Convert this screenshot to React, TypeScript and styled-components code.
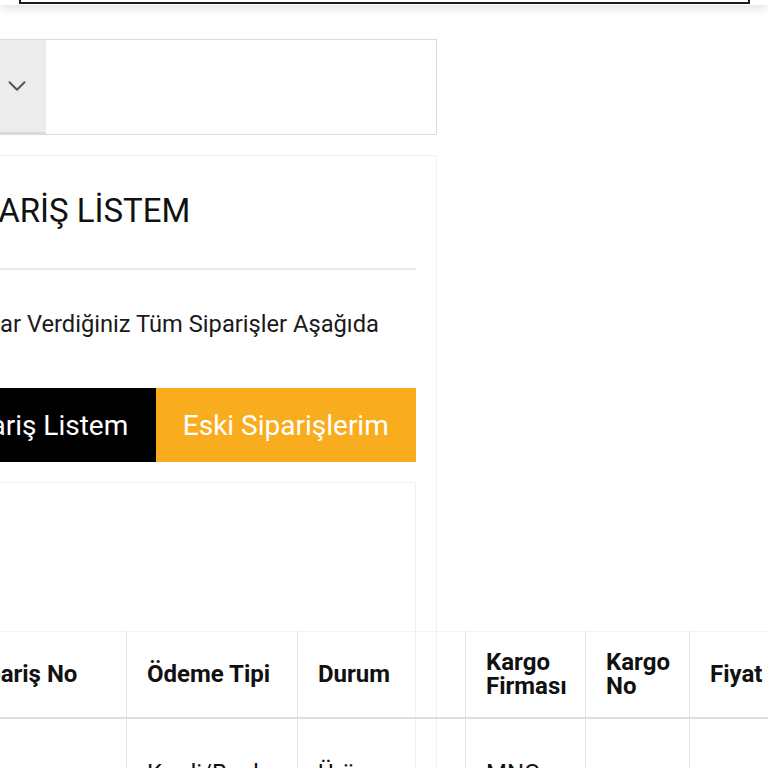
import React from "react";
import styled, { createGlobalStyle } from "styled-components";
import { ChevronDown } from "lucide-react";

const GlobalStyle = createGlobalStyle`
  html, body {
    margin: 0;
    padding: 0;
    background: #fff;
    overflow: hidden;
  }
  body {
    font-family: Roboto, "Liberation Sans", Arial, sans-serif;
    color: #111;
  }
  * {
    box-sizing: border-box;
  }
`;

const Header = styled.header`
  position: relative;
  z-index: 2;
  margin-top: -50px;
  padding: 6px 18px 1px 19px;
  background: #fff;
  box-shadow: 0 3px 10px rgba(0, 0, 0, 0.13);
`;

const SearchBox = styled.div`
  height: 48px;
  border: 2px solid #1d1d1d;
  background: #fff;
`;

const Main = styled.main`
  width: 534px;
  margin: 34px 0 0 -97px;
  display: flex;
  flex-direction: column;
  gap: 20px;
`;

const FilterRow = styled.div`
  display: flex;
  height: 96px;
  border: 1px solid #dcdcdc;
  background: #fff;
`;

const SelectButton = styled.div`
  width: 142px;
  display: flex;
  align-items: center;
  justify-content: flex-end;
  padding-right: 14px;
  background: #ececec;
  border-bottom: 2px solid #dadada;
  color: #555;
`;

const FilterInput = styled.div`
  flex: 1;
`;

const Card = styled.section`
  border: 1px solid #efefef;
  padding: 0 20px;
  background: #fff;
`;

const Title = styled.h1`
  margin: 0;
  padding: 35px 0 0 27px;
  height: 114px;
  font-size: 33px;
  font-weight: 400;
  color: #111;
  border-bottom: 2px solid #e9e9e9;
`;

const Lead = styled.p`
  margin: 0;
  padding: 40px 0 0 35px;
  height: 118px;
  font-size: 23.7px;
  color: #1a1a1a;
  white-space: nowrap;
`;

const Tabs = styled.div`
  display: flex;
  height: 74px;
`;

const Tab = styled.button<{ $active?: boolean }>`
  flex: 1 1 auto;
  border: 0;
  padding: 0;
  font-family: inherit;
  font-size: 28px;
  font-weight: 400;
  color: #fff;
  background: ${(p) => (p.$active ? "#000" : "#f9ad1e")};
  cursor: pointer;
`;

const ListBox = styled.div`
  margin-top: 20px;
  border: 1px solid #f1f1f1;
  padding: 148px 0 0 20px;
`;

const Table = styled.table`
  border-collapse: collapse;
  table-layout: fixed;
  width: 950px;
  border-top: 1px solid #f3f3f3;
`;

const Th = styled.th<{ $w: number }>`
  width: ${(p) => p.$w}px;
  height: 86px;
  padding: 0 14px 0 20px;
  text-align: left;
  vertical-align: middle;
  font-size: 24px;
  font-weight: 700;
  line-height: 24px;
  color: #111;
  border-left: 1px solid #e2e2e2;
  border-bottom: 2px solid #dedede;
`;

const Td = styled.td`
  height: 140px;
  padding: 0 14px 0 20px;
  vertical-align: middle;
  font-size: 24px;
  line-height: 30px;
  color: #111;
  border-left: 1px solid #e2e2e2;
  border-bottom: 1px solid #e2e2e2;
`;

const columns = [
  { label: "Sipariş No", w: 181 },
  { label: "Ödeme Tipi", w: 171 },
  { label: "Durum", w: 168 },
  { label: "Kargo Firması", w: 120 },
  { label: "Kargo No", w: 104 },
  { label: "Fiyat", w: 206 },
];

const rows = [
  ["10482", "Kredi/Banka Kartı", "Ürün Hazırlanıyor", "MNG Kargo", "", "2.000,00 TL"],
  ["10377", "Kredi/Banka Kartı", "Teslim Edildi", "MNG Kargo", "", "1.250,00 TL"],
];

export default function App() {
  return (
    <>
      <GlobalStyle />
      <Header>
        <SearchBox />
      </Header>
      <Main>
        <FilterRow>
          <SelectButton>
            <ChevronDown size={30} strokeWidth={1.6} />
          </SelectButton>
          <FilterInput />
        </FilterRow>
        <Card>
          <Title>SİPARİŞ LİSTEM</Title>
          <Lead>Kadar Verdiğiniz Tüm Siparişler Aşağıda</Lead>
          <Tabs>
            <Tab $active>Sipariş Listem</Tab>
            <Tab>Eski Siparişlerim</Tab>
          </Tabs>
          <ListBox>
            <Table>
              <thead>
                <tr>
                  {columns.map((c) => (
                    <Th key={c.label} $w={c.w}>
                      {c.label}
                    </Th>
                  ))}
                </tr>
              </thead>
              <tbody>
                {rows.map((r) => (
                  <tr key={r[0]}>
                    {r.map((cell, i) => (
                      <Td key={i}>{cell}</Td>
                    ))}
                  </tr>
                ))}
              </tbody>
            </Table>
          </ListBox>
        </Card>
      </Main>
    </>
  );
}
